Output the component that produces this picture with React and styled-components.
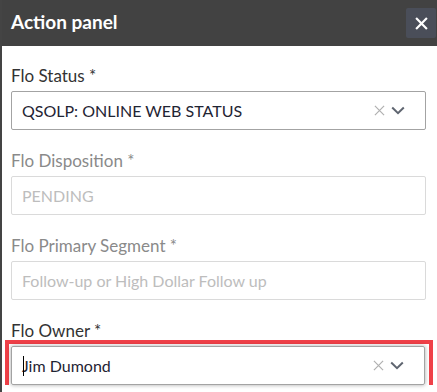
import React from "react"
import styled, { createGlobalStyle, css } from "styled-components"

const GlobalStyle = createGlobalStyle`
  html, body {
    margin: 0;
    padding: 0;
    background: #fff;
  }
  body {
    font-family: Lato, "Noto Sans", sans-serif;
  }
`

const Panel = styled.div`
  width: 437px;
  height: 392px;
  overflow: hidden;
  background: #fff;
  border-left: 2px solid #444;
  box-sizing: border-box;
`

const Header = styled.div`
  height: 46px;
  margin-left: -2px;
  background: #424242;
  display: flex;
  align-items: center;
  justify-content: space-between;
  padding: 0 1px 4px 11px;
  box-sizing: border-box;
`

const Title = styled.h1`
  margin: 0;
  color: #fff;
  font-size: 19px;
  font-weight: 700;
`

const CloseButton = styled.button`
  width: 30px;
  height: 30px;
  border: none;
  border-radius: 2px;
  background: #4a4e59;
  display: flex;
  align-items: center;
  justify-content: center;
  padding: 0;
  margin-top: 4px;
`

const Body = styled.div`
  padding: 20px 11px 0 9px;
  display: flex;
  flex-direction: column;
  gap: 21px;
`

const Field = styled.div`
  display: flex;
  flex-direction: column;
  gap: 5px;
`

const Label = styled.label`
  font-size: 17px;
  line-height: 20px;
  color: ${(p) => (p.$disabled ? "#8a8a8a" : "#333")};
`

const Highlight = styled.div`
  margin: -6px -7px 0 -6px;
  padding: 2px 4px 0 2px;
  border: 4px solid #ef4048;
  border-bottom: none;
`

const Input = styled.div`
  height: 39px;
  box-sizing: border-box;
  border: 1px solid ${(p) => (p.$disabled ? "#dadada" : "#a3a3a3")};
  border-radius: 2px;
  display: flex;
  align-items: center;
  padding: 0 20px 0 10px;
  font-size: 16px;
  color: ${(p) => (p.$disabled ? "#bdbdbd" : "#1f2433")};
  ${(p) =>
    p.$focused &&
    css`
      box-shadow: 0 0 4px rgba(0, 0, 0, 0.35);
    `}
`

const Value = styled.span`
  flex: 1;
  position: relative;
`

const Caret = styled.span`
  position: absolute;
  left: 1px;
  top: 0;
  width: 1px;
  height: 20px;
  background: #000;
`

const Controls = styled.div`
  display: flex;
  align-items: center;
  gap: 6px;
`

const XIcon = ({ color = "#b0b0b0", size = 11, width = 1.3 }) => (
  <svg width={size} height={size} viewBox="0 0 12 12">
    <path d="M1 1L11 11M11 1L1 11" stroke={color} strokeWidth={width} fill="none" />
  </svg>
)

const Chevron = () => (
  <svg width="14" height="9" viewBox="0 0 14 9">
    <path d="M1.2 1.5L7 7.2L12.8 1.5" stroke="#5f6570" strokeWidth="2" fill="none" />
  </svg>
)

const SelectControls = () => (
  <Controls>
    <XIcon />
    <Chevron />
  </Controls>
)

const App = () => {
  return (
    <Panel>
      <GlobalStyle />
      <Header>
        <Title>Action panel</Title>
        <CloseButton>
          <XIcon color="#fff" size={13} width={2} />
        </CloseButton>
      </Header>
      <Body>
        <Field>
          <Label>Flo Status *</Label>
          <Input>
            <Value>QSOLP: ONLINE WEB STATUS</Value>
            <SelectControls />
          </Input>
        </Field>
        <Field>
          <Label $disabled>Flo Disposition *</Label>
          <Input $disabled>
            <Value>PENDING</Value>
          </Input>
        </Field>
        <Field>
          <Label $disabled>Flo Primary Segment *</Label>
          <Input $disabled>
            <Value>Follow-up or High Dollar Follow up</Value>
          </Input>
        </Field>
        <Field>
          <Label>Flo Owner *</Label>
          <Highlight>
            <Input $focused>
              <Value>
                <Caret />
                Jim Dumond
              </Value>
              <SelectControls />
            </Input>
          </Highlight>
        </Field>
      </Body>
    </Panel>
  )
}

export default App
